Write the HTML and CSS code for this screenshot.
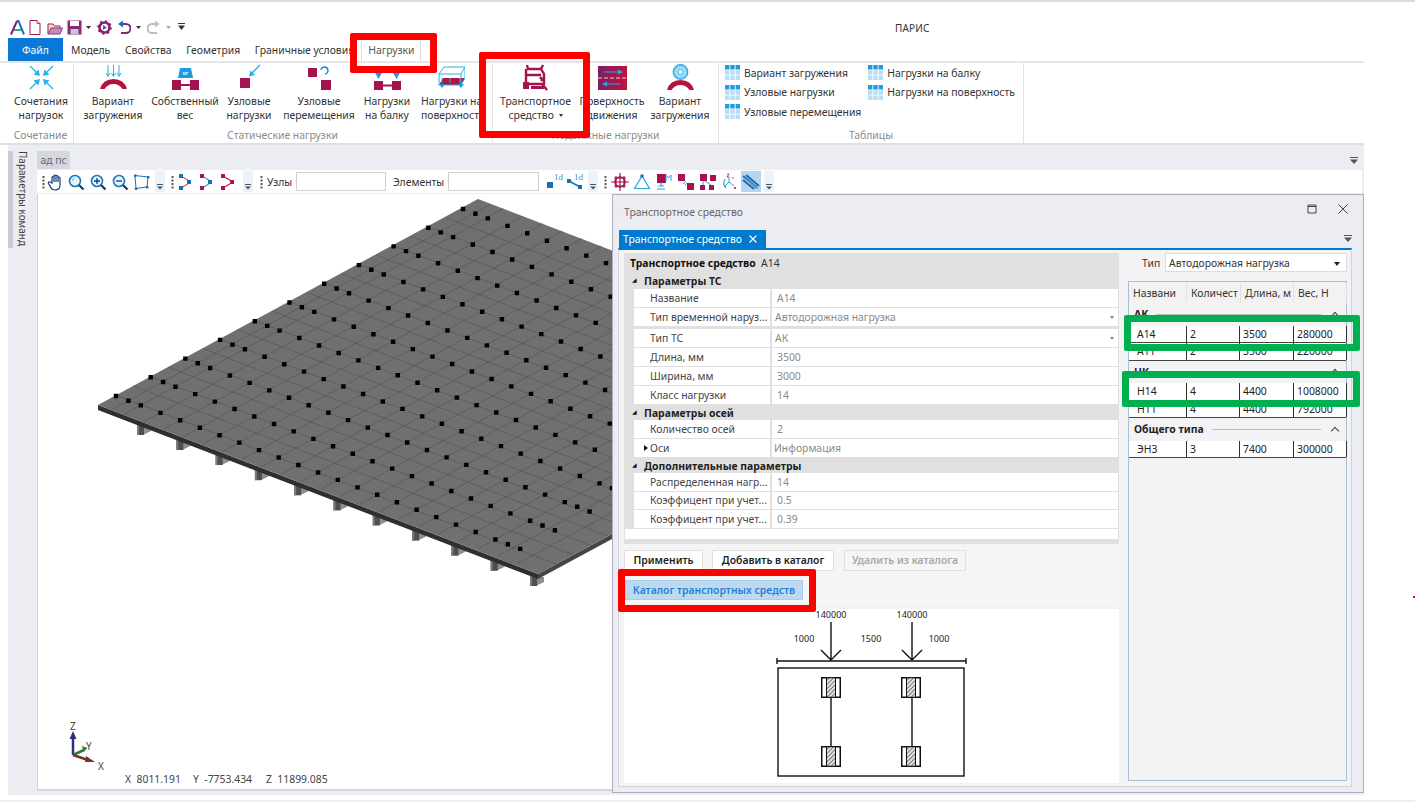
FILE: index.html
```html
<!DOCTYPE html>
<html lang="ru">
<head>
<meta charset="utf-8">
<title>ПАРИС</title>
<link rel="stylesheet" href="styles.css">
</head>
<body>
<svg class="defs" width="0" height="0">
  <defs>
    <symbol id="tbl" viewBox="0 0 15 15">
      <rect width="15" height="15" fill="#fff"/>
      <path d="M0 0h4.400v4.400H0zM5.300 0h4.400v4.400H5.300zM10.600 0H15v4.400h-4.400z" fill="#1e9be2"/>
      <path d="M0 5.300h4.400v4.400H0zM5.300 5.300h4.400v4.400H5.300zM10.600 5.300H15v4.400h-4.400zM0 10.600h4.400V15H0zM5.300 10.600h4.400V15H5.300zM10.600 10.600H15V15h-4.400z" fill="#b9dff7"/>
    </symbol>
    <symbol id="more" viewBox="0 0 10 21">
      <path d="M2 13.500h6" stroke="#555" stroke-width="1"/><path d="M2 15.500h6l-3 3z" fill="#555"/>
    </symbol>
    <symbol id="grip" viewBox="0 0 5 14">
      <path d="M1.500 1h2v2h-2zM1.500 4.500h2v2h-2zM1.500 8h2v2h-2zM1.500 11.500h2v2h-2z" fill="#555"/>
    </symbol>
    <symbol id="wheel" viewBox="0 0 20 21">
      <rect x=".75" y=".75" width="18.500" height="19.500" fill="#fff" stroke="#111" stroke-width="1.500"/>
      <rect x="5.500" y=".75" width="9" height="19.500" fill="url(#hatch)" stroke="#111" stroke-width="1"/>
    </symbol>
    <pattern id="hatch" width="3" height="3" patternUnits="userSpaceOnUse" patternTransform="rotate(45)">
      <rect width="3" height="3" fill="#e2e2e2"/><rect width="1" height="3" fill="#777"/>
    </pattern>
    <path id="dotrow" d="M-2.200-2.200h4.400v4.400h-4.400zm12.400 4.700h4.400v4.400h-4.400zm12.400 4.700h4.400v4.400h-4.400zm19.700 7.450h4.400v4.400h-4.400zm19.700 7.450h4.400v4.400h-4.400zm19.700 7.450h4.400v4.400h-4.400zm19.700 7.450h4.400v4.400h-4.400zm19.700 7.450h4.400v4.400h-4.400zm19.700 7.450h4.400v4.400h-4.400zm19.700 7.450h4.400v4.400h-4.400zm19.700 7.450h4.400v4.400h-4.400zm19.700 7.450h4.400v4.400h-4.400zm19.700 7.450h4.400v4.400h-4.400zm19.700 7.450h4.400v4.400h-4.400zm19.700 7.450h4.400v4.400h-4.400zm19.700 7.450h4.400v4.400h-4.400zm19.700 7.450h4.400v4.400h-4.400zm19.700 7.450h4.400v4.400h-4.400zm19.700 7.450h4.400v4.400h-4.400zm19.700 7.450h4.400v4.400h-4.400zm19.700 7.450h4.400v4.400h-4.400zm12.400 4.700h4.400v4.400h-4.400zm12.400 4.700h4.400v4.400h-4.400z"/>
    <g id="beam">
      <path d="M6 12l8-4V3H6z" fill="#8e8e8e"/>
      <rect width="7" height="12" fill="#4e4e4e"/>
      <rect width="2" height="12" fill="#7a7a7a"/>
    </g>
  </defs>
</svg>

<div class="app">
  <header class="titlebar">
    <div class="qat">
      <svg class="q q-a" viewBox="0 0 15 15"><path d="M1 14.500L7 1" fill="none" stroke="#8b1a6b" stroke-width="2"/><path d="M7 1h1.500L14 14.500" fill="none" stroke="#1a73b8" stroke-width="2"/><path d="M3.500 10h8" stroke="#158a7a" stroke-width="1.600"/></svg>
      <svg class="q q-doc" viewBox="0 0 12 15"><path d="M1 .5h7l3 3v11H1z" fill="#fff" stroke="#a3195b" stroke-width="1"/><path d="M8 .5v3h3" fill="#f2d9e4" stroke="#a3195b" stroke-width=".8"/></svg>
      <svg class="q q-open" viewBox="0 0 16 13"><path d="M1 12V2h5l1.500 2H13v2" fill="#f0dfb9" stroke="#a3195b" stroke-width="1"/><path d="M1 12l3-6h11.500L13 12z" fill="#c88ab0" stroke="#7b3f8f" stroke-width="1"/></svg>
      <svg class="q q-save" viewBox="0 0 15 15"><rect x=".5" y=".5" width="14" height="14" fill="#8d2a6d"/><rect x="3" y="1" width="9" height="5" fill="#fff"/><rect x="3.500" y="9" width="8" height="5" fill="#b9c8ea"/></svg>
      <svg class="q-arr" viewBox="0 0 5 3"><path d="M0 0h5L2.500 3z" fill="#333"/></svg>
      <svg class="q q-gear" viewBox="0 0 15 15"><circle cx="7.500" cy="7.500" r="5" fill="none" stroke="#8d1f6e" stroke-width="2.600"/><circle cx="7.500" cy="7.500" r="6.300" fill="none" stroke="#8d1f6e" stroke-width="2" stroke-dasharray="2 2.900"/><path d="M6 5l4 2.500L6 10z" fill="#2a6fc0"/></svg>
      <svg class="q q-undo" viewBox="0 0 13 15"><path d="M3 4h5a4 4 0 0 1 0 9H3" fill="none" stroke="#7b2a80" stroke-width="2"/><path d="M5 .5v7L0 4z" fill="#1a6fb8"/></svg>
      <svg class="q-arr q-gap" viewBox="0 0 5 3"><path d="M0 0h5L2.500 3z" fill="#333"/></svg>
      <svg class="q q-redo" viewBox="0 0 13 15"><path d="M10 4H5a4 4 0 0 0 0 9h5" fill="none" stroke="#bdbdbd" stroke-width="2"/><path d="M8 .5v7L13 4z" fill="#c4c4c4"/></svg>
      <svg class="q-arr q-gap2" viewBox="0 0 5 3"><path d="M0 0h5L2.500 3z" fill="#aaa"/></svg>
      <svg class="q-drop" viewBox="0 0 7 7"><path d="M0 0h7v1H0zM0 2.500h7L3.500 7z" fill="#333"/></svg>
    </div>
    <div class="apptitle">ПАРИС</div>
  </header>

  <nav class="tabs">
    <div class="tab-file">Файл</div>
    <div class="tab">Модель</div>
    <div class="tab">Свойства</div>
    <div class="tab">Геометрия</div>
    <div class="tab tab-wide">Граничные условия</div>
    <div class="tab-active">Нагрузки</div>
  </nav>

  <section class="ribbon">
    <div class="rgroup g1">
      <div class="rbtns">
        <div class="rb w-66">
          <svg class="ric" viewBox="0 0 27 27"><g stroke="#25b1ef" stroke-width="1.200"><path d="M2 2l7 7M25 2l-7 7M2 25l7-7M25 25l-7-7"/></g><path d="M12 12L5.500 10.500 10.500 5.500zM15 12l6.500-1.500L16.500 5.500zM12 15l-6.500 1.500 5 5zM15 15l6.500 1.500-5 5z" fill="#25b1ef"/></svg>
          <span>Сочетания<br>нагрузок</span>
        </div>
      </div>
      <div class="rlabel">Сочетание</div>
    </div>
    <div class="rgroup g2">
      <div class="rbtns">
        <div class="rb w-68">
          <svg class="ric" viewBox="0 0 27 27"><path d="M0 25Q3 15 13.500 15T27 25h-4.500Q19 20 13.500 20T4.500 25z" fill="#b3123f"/><g fill="none" stroke="#25b1ef" stroke-width="1"><path d="M8 1v11M13.500 1v11M19 1v11M6 9l2 3.500L10 9M11.500 9l2 3.500 2-3.500M17 9l2 3.500L21 9"/></g></svg>
          <span>Вариант<br>загружения</span>
        </div>
        <div class="rb w-76">
          <svg class="ric" viewBox="0 0 27 27"><path d="M0 16h9v10H0zM18 16h9v10H18zM9 20h9v2H9z" fill="#a4134f"/><path d="M8 4h11l2 10H6z" fill="#1c9be0"/><text x="13.500" y="11" class="kg">кг</text></svg>
          <span>Собственный<br>вес</span>
        </div>
        <div class="rb w-52">
          <svg class="ric" viewBox="0 0 27 27"><rect x="4" y="14" width="10" height="10" fill="#a4134f"/><path d="M24 1L15 10" stroke="#25b1ef" stroke-width="1.300"/><path d="M13 12.500l1.500-6 4.500 4.500z" fill="#25b1ef"/></svg>
          <span>Узловые<br>нагрузки</span>
        </div>
        <div class="rb w-88">
          <svg class="ric" viewBox="0 0 27 27"><rect x="2" y="4" width="9" height="9" fill="#a4134f"/><rect x="15" y="16" width="10" height="10" fill="#a4134f"/><path d="M15 6a3.500 3.500 0 1 1 4 4" fill="none" stroke="#1c8fd0" stroke-width="1.400"/></svg>
          <span>Узловые<br>перемещения</span>
        </div>
        <div class="rb w-48">
          <svg class="ric" viewBox="0 0 27 27"><path d="M0 17h9v9H0zM18 17h9v9H18zM9 20.500h9v2H9z" fill="#a4134f"/><path d="M0 7h9L4.500 15zM18 7h9L22.500 15z" fill="#1c9be0"/></svg>
          <span>Нагрузки<br>на балку</span>
        </div>
        <div class="rb w-surf">
          <svg class="ric" viewBox="0 0 27 27"><path d="M1 21L5 14H27L23 21z" fill="#b3123f"/><g fill="none" stroke="#25b1ef" stroke-width="1"><path d="M1 10L6 3h21v11l-4 7H1zM1 10h22v11M23 10l4-7M4 14v5M12 14v5M22 14v5"/></g><path d="M1 20h6l-3 4zM20 20h6l-3 4z" fill="#1c9be0"/></svg>
          <span>Нагрузки на<br>поверхность</span>
        </div>
      </div>
      <div class="rlabel rlabel-static">Статические нагрузки</div>
    </div>
    <div class="rgroup g3">
      <div class="rbtns">
        <div class="rb w-transport">
          <svg class="ric" viewBox="0 0 27 27"><g fill="none" stroke="#a4134f" stroke-width="2.400"><path d="M5 1l1 4h13l2-4M5 5h14l3 5v10H4V5M4 11h15M22 14l-3 3"/><path d="M20 20l5 6"/></g><path d="M1 18h6v7H1zM9 22h13v3H9z" fill="#a4134f"/><circle cx="19" cy="14" r="1.600" fill="#a4134f"/></svg>
          <span>Транспортное<br>средство <i class="tri"></i></span>
        </div>
        <div class="rb w-surface">
          <svg class="ric ric-w" viewBox="0 0 29 25"><defs><linearGradient id="g" x1="0" x2="1"><stop offset="0" stop-color="#7c1e63"/><stop offset="1" stop-color="#c0143c"/></linearGradient></defs><rect width="29" height="24" fill="url(#g)"/><path d="M0 12h29" stroke="#f3c8d2" stroke-width="1" stroke-dasharray="4 2"/><path d="M6 6h15M7 18h15" stroke="#25a6e8" stroke-width="1.200"/><path d="M20 3.500l5 2.500-5 2.500zM9 15.500L4 18l5 2.500z" fill="#25a6e8"/></svg>
          <span>Поверхность<br>движения</span>
        </div>
        <div class="rb w-variant2">
          <svg class="ric" viewBox="0 0 27 27"><path d="M0 26Q3 16 13.500 16T27 26h-4.500Q19 21 13.500 21T4.500 26z" fill="#b3123f"/><circle cx="13.500" cy="8" r="7.300" fill="#7fd0f5" stroke="#25a6e8" stroke-width="1.200"/><circle cx="13.500" cy="8" r="4.500" fill="none" stroke="#fff" stroke-width="1" stroke-dasharray="1.500 1"/><circle cx="13.500" cy="8" r="1.500" fill="#fff"/></svg>
          <span>Вариант<br>загружения</span>
        </div>
      </div>
      <div class="rlabel">Подвижные нагрузки</div>
    </div>
    <div class="rgroup g4">
      <div class="tables">
        <div class="tcol">
          <div class="trow"><svg class="tic"><use href="#tbl"/></svg>Вариант загружения</div>
          <div class="trow"><svg class="tic"><use href="#tbl"/></svg>Узловые нагрузки</div>
          <div class="trow"><svg class="tic"><use href="#tbl"/></svg>Узловые перемещения</div>
        </div>
        <div class="tcol">
          <div class="trow"><svg class="tic"><use href="#tbl"/></svg>Нагрузки на балку</div>
          <div class="trow"><svg class="tic"><use href="#tbl"/></svg>Нагрузки на поверхность</div>
        </div>
      </div>
      <div class="rlabel">Таблицы</div>
    </div>
  </section>

  <main class="work">
    <aside class="side">
      <div class="side-mark"></div>
      <div class="side-text">Параметры команд</div>
    </aside>
    <div class="main">
      <div class="doctabs">
        <div class="doctab">ад пс</div>
        <svg class="drop2" viewBox="0 0 8 7"><path d="M0 0h8v1H0zM0 2.500h8L4 7z" fill="#555"/></svg>
      </div>
      <div class="toolbar">
        <svg class="grip g-first"><use href="#grip"/></svg>
        <div class="ti ti-hand"><svg class="ico" viewBox="0 0 18 18"><path d="M5 10V4.500a1 1 0 0 1 2 0V9 3a1 1 0 0 1 2 0v6-5.500a1 1 0 0 1 2 0V9 5a1 1 0 0 1 2 0v7c0 3-2 5-5 5-2.500 0-3.500-1-4.500-3L1.500 10.500c-.8-1.500 1-2.300 2-1.200z" fill="#fff" stroke="#123a7a" stroke-width="1.200"/></svg></div>
        <div class="ti"><svg class="ico" viewBox="0 0 18 18"><circle cx="8" cy="8" r="5.500" fill="#e8f4fc" stroke="#1c78b8" stroke-width="1.600"/><path d="M12 12l4.500 4.500" stroke="#123a7a" stroke-width="2.200"/><path d="M5.500 8a2.500 2.500 0 0 1 2.500-2.500" stroke="#7cc6ee" stroke-width="1.200" fill="none"/></svg></div>
        <div class="ti"><svg class="ico" viewBox="0 0 18 18"><circle cx="8" cy="8" r="5.500" fill="#e8f4fc" stroke="#1c78b8" stroke-width="1.600"/><path d="M12 12l4.500 4.500" stroke="#123a7a" stroke-width="2.200"/><path d="M5 8h6M8 5v6" stroke="#123a7a" stroke-width="1.300"/></svg></div>
        <div class="ti"><svg class="ico" viewBox="0 0 18 18"><circle cx="8" cy="8" r="5.500" fill="#e8f4fc" stroke="#1c78b8" stroke-width="1.600"/><path d="M12 12l4.500 4.500" stroke="#123a7a" stroke-width="2.200"/><path d="M5 8h6" stroke="#123a7a" stroke-width="1.300"/></svg></div>
        <div class="ti"><svg class="ico" viewBox="0 0 18 18"><path d="M2 2.500l13 1.500-1 10-11 1.500z" fill="none" stroke="#1c6fb0" stroke-width="1"/><g fill="#1c6fb0"><rect x="1" y="1.500" width="2.400" height="2.400"/><rect x="14" y="3" width="2.400" height="2.400"/><rect x="13" y="13" width="2.400" height="2.400"/><rect x="1.800" y="14.500" width="2.400" height="2.400"/></g></svg></div>
        <svg class="strip"><use href="#more"/></svg>
        <svg class="grip g-two"><use href="#grip"/></svg>
        <div class="ti ti-21"><svg class="ico" viewBox="0 0 18 18"><path d="M4 3l10 6-10 6" fill="none" stroke="#c2185b" stroke-width="1"/><g fill="#1c6fb0"><rect x="2" y="1" width="4" height="4"/><rect x="2" y="13" width="4" height="4"/><rect x="10" y="7" width="4" height="4"/></g></svg></div>
        <div class="ti ti-21"><svg class="ico" viewBox="0 0 18 18"><path d="M4 3l10 6-10 6" fill="none" stroke="#1c6fb0" stroke-width="1"/><g fill="#b0124f"><rect x="2" y="1" width="4" height="4"/><rect x="2" y="13" width="4" height="4"/></g><rect x="10" y="7" width="4" height="4" fill="#1c6fb0"/></svg></div>
        <div class="ti ti-21"><svg class="ico" viewBox="0 0 18 18"><path d="M4 3l10 6-10 6" fill="none" stroke="#c2185b" stroke-width="1.200"/><g fill="#b0124f"><rect x="2" y="1" width="4" height="4"/><rect x="2" y="13" width="4" height="4"/><rect x="11" y="7" width="4" height="4"/></g></svg></div>
        <svg class="strip strip-3"><use href="#more"/></svg>
        <svg class="grip g-three"><use href="#grip"/></svg>
        <label class="tl tl-nodes">Узлы</label>
        <div class="tinput ti-90"></div>
        <label class="tl tl-elems">Элементы</label>
        <div class="tinput ti-91"></div>
        <div class="ti ti-1d"><svg class="ico" viewBox="0 0 18 18"><rect x="1" y="9" width="6" height="6" fill="#1c6fb0"/><text x="8" y="7" class="oned">1d</text></svg></div>
        <div class="ti"><svg class="ico" viewBox="0 0 18 18"><path d="M3 8l11 6" stroke="#1c6fb0" stroke-width="1.500"/><rect x="1" y="6" width="4" height="4" fill="#1c6fb0"/><rect x="12" y="12" width="4" height="4" fill="#1c6fb0"/><text x="8" y="7" class="oned">1d</text></svg></div>
        <svg class="strip"><use href="#more"/></svg>
        <svg class="grip g-four"><use href="#grip"/></svg>
        <div class="ti ti-cross"><svg class="ico" viewBox="0 0 18 18"><circle cx="9" cy="9" r="5" fill="none" stroke="#a4134f" stroke-width="1.600"/><path d="M9 0v18M0 9h18M5 3v12M13 3v12M3 5h12M3 13h12" stroke="#a4134f" stroke-width="1.200"/></svg></div>
        <div class="ti"><svg class="ico" viewBox="0 0 18 18"><path d="M9 3L1.500 15.500h15z" fill="none" stroke="#25a6e8" stroke-width="1.200"/><circle cx="9" cy="3" r="1.800" fill="#1c78b8"/></svg></div>
        <div class="ti"><svg class="ico" viewBox="0 0 18 18"><rect x="2" y="1" width="9" height="9" fill="#a4134f"/><path d="M6 10v3M3 13h6M2 16h8" stroke="#25a6e8" stroke-width="1.200"/><path d="M11 8V2l2.500 3L16 2v6" fill="none" stroke="#25a6e8" stroke-width="1"/></svg></div>
        <div class="ti"><svg class="ico" viewBox="0 0 18 18"><rect x="1" y="1" width="7" height="7" fill="#a4134f"/><rect x="10" y="10" width="7" height="7" fill="#a4134f"/><path d="M6 11l3-3M8 12l2-2" stroke="#25a6e8" stroke-width="1"/></svg></div>
        <div class="ti"><svg class="ico" viewBox="0 0 18 18"><g fill="#a4134f"><rect x="1" y="1" width="7" height="7"/><rect x="11" y="2" width="6" height="6"/><rect x="1" y="12" width="5" height="5"/><rect x="10" y="12" width="5" height="5"/></g><path d="M4 8v4M6 8l6 4" stroke="#25a6e8" stroke-width="1"/></svg></div>
        <div class="ti"><svg class="ico" viewBox="0 0 18 18"><path d="M8 9L3 14M8 9l5 4M8 9V4" fill="none" stroke="#25a6e8" stroke-width="1"/><path d="M4 6Q1 11 5 15" fill="none" stroke="#1c78b8" stroke-width="1"/><path d="M6 1l2 0-2 3h2M11 5l2 0M13 14l2 2M15 14l-2 2" stroke="#b0124f" stroke-width=".8" fill="none"/></svg></div>
        <div class="ti ti-on"><svg class="ico" viewBox="0 0 18 18"><g stroke="#1c6fb0" stroke-width="2.200"><path d="M1 3l14 12M1 7l11 9M4 2l13 11"/></g><path d="M2 5l14 11" stroke="#7fb5dc" stroke-width="1"/></svg></div>
        <svg class="strip strip-on"><use href="#more"/></svg>
      </div>
      <div class="viewport">
        <svg class="scene" viewBox="37 194 575 597">
          <use href="#beam" x="137" y="423"/><use href="#beam" x="176.300" y="438"/><use href="#beam" x="215.600" y="453"/><use href="#beam" x="254.900" y="468.200"/><use href="#beam" x="294.200" y="483.300"/><use href="#beam" x="333.500" y="498.400"/><use href="#beam" x="372.800" y="513.500"/><use href="#beam" x="412.100" y="528.600"/><use href="#beam" x="451.400" y="543.700"/><use href="#beam" x="490.700" y="558.800"/><use href="#beam" x="530" y="574"/>
          <path d="M98 405L538 574v5L98 410z" fill="#2f2f2f"/>
          <path d="M538 574l74-40v5l-74 40z" fill="#454545"/>
          <path d="M98 405L478 199 918 368 538 574z" fill="#707070"/>
          <path class="gridlines" d="M116 395.200l440 169m-422.650-178.350l440 169m-422.650-178.350l440 169m-422.650-178.350l440 169m-422.650-178.350l440 169m-422.650-178.350l440 169m-422.650-178.350l440 169m-422.650-178.350l440 169m-422.650-178.350l440 169m-422.650-178.350l440 169m-422.650-178.350l440 169m-422.650-178.350l440 169m-422.650-178.350l440 169m-422.650-178.350l440 169m-422.650-178.350l440 169m-422.650-178.350l440 169m-422.650-178.350l440 169m-422.650-178.350l440 169m-422.650-178.350l440 169m-422.650-178.350l440 169"/>
          <path class="gridlines" d="M111 410l380-206m-367.600 210.700l380-206m-360.300 213.450l380-206m-360.300 213.450l380-206m-360.300 213.450l380-206m-360.300 213.450l380-206m-360.300 213.450l380-206m-360.300 213.450l380-206m-360.300 213.450l380-206m-360.300 213.450l380-206m-360.300 213.450l380-206m-360.300 213.450l380-206m-360.300 213.450l380-206m-360.300 213.450l380-206m-360.300 213.450l380-206m-360.300 213.450l380-206m-360.300 213.450l380-206m-360.300 213.450l380-206m-360.300 213.450l380-206m-360.300 213.450l380-206m-360.300 213.450l380-206m-360.300 213.450l380-206"/>
          <use href="#dotrow" x="116" y="396"/><use href="#dotrow" x="150.700" y="377.300"/><use href="#dotrow" x="185.400" y="358.600"/><use href="#dotrow" x="220.100" y="339.900"/><use href="#dotrow" x="254.800" y="321.200"/><use href="#dotrow" x="289.500" y="302.500"/><use href="#dotrow" x="324.200" y="283.800"/><use href="#dotrow" x="358.900" y="265.100"/><use href="#dotrow" x="393.600" y="246.400"/><use href="#dotrow" x="428.300" y="227.700"/><use href="#dotrow" x="463" y="209"/>
          <path d="M73 755V737" stroke="#2f2f80" stroke-width="2.500"/><path d="M69.500 739L73 731l3.500 8z" fill="#2f2f80"/>
          <path d="M73 755l11-5" stroke="#2e7d32" stroke-width="2.500"/><path d="M82 746l5.500 2-4 4z" fill="#2e7d32"/>
          <path d="M73 755l15 5" stroke="#7a2f2f" stroke-width="2.500"/><path d="M86 756l9 6-10 0z" fill="#7a2f2f"/>
          <text x="70" y="730" class="ax">Z</text><text x="86" y="750" class="ax">Y</text><text x="98" y="770" class="ax">X</text>
          <text x="125" y="783" class="coord">X  8011.191</text><text x="193" y="783" class="coord">Y  -7753.434</text><text x="266" y="783" class="coord">Z  11899.085</text>
        </svg>
      </div>
    </div>

    <div class="panel">
      <div class="ptitle">
        <span>Транспортное средство</span>
        <svg class="pbtn pb-max" viewBox="0 0 10 10"><path d="M1 1h8v8H1zM1 2.500h8" fill="none" stroke="#444" stroke-width="1"/></svg>
        <svg class="pbtn" viewBox="0 0 10 10"><path d="M.5.5l9 9M9.500.5l-9 9" stroke="#444" stroke-width="1"/></svg>
      </div>
      <div class="ptabs">
        <div class="ptab">Транспортное средство <svg class="ptabx" viewBox="0 0 8 8"><path d="M.5.5l7 7M7.500.5l-7 7" stroke="#fff" stroke-width="1.100"/></svg></div>
        <svg class="drop3" viewBox="0 0 8 7"><path d="M0 0h8v1H0zM0 2.500h8L4 7z" fill="#555"/></svg>
      </div>
      <div class="pbody">
        <div class="pleft">
          <div class="grid">
            <div class="ghead"><b>Транспортное средство</b>&nbsp; А14</div>
            <div class="ggroup g16"><i class="gtri">◢</i>Параметры ТС</div>
            <div class="grow"><div class="gl">Название</div><div class="gv">А14</div></div>
            <div class="grow grow-gap"><div class="gl">Тип временной наруз...</div><div class="gv gv-c">Автодорожная нагрузка<i class="mini"></i></div></div>
            <div class="grow"><div class="gl">Тип ТС</div><div class="gv gv-c">АК<i class="mini"></i></div></div>
            <div class="grow"><div class="gl">Длина, мм</div><div class="gv">3500</div></div>
            <div class="grow"><div class="gl">Ширина, мм</div><div class="gv">3000</div></div>
            <div class="grow"><div class="gl">Класс нагрузки</div><div class="gv">14</div></div>
            <div class="ggroup g15"><i class="gtri">◢</i>Параметры осей</div>
            <div class="grow"><div class="gl">Количество осей</div><div class="gv">2</div></div>
            <div class="grow"><div class="gl gl-exp"><i class="exp"></i>Оси</div><div class="gv gv-i">Информация</div></div>
            <div class="ggroup g15"><i class="gtri">◢</i>Дополнительные параметры</div>
            <div class="grow tight"><div class="gl">Распределенная нагр...</div><div class="gv">14</div></div>
            <div class="grow tight"><div class="gl">Коэффицент при учет...</div><div class="gv">0.5</div></div>
            <div class="grow tight"><div class="gl">Коэффицент при учет...</div><div class="gv">0.39</div></div>
            <div class="gempty"></div>
          </div>
          <div class="actions">
            <div class="btnrow">
              <div class="btn b-apply">Применить</div>
              <div class="btn b-add">Добавить в каталог</div>
              <div class="btn b-del">Удалить из каталога</div>
            </div>
            <div class="btn-cat">Каталог транспортных средств</div>
          </div>
          <div class="diagram">
            <svg class="dsvg" viewBox="0 0 494 174">
              <text x="207" y="9" class="dt">140000</text><text x="288" y="9" class="dt">140000</text>
              <text x="180" y="33" class="dt">1000</text><text x="247" y="33" class="dt">1500</text><text x="315" y="33" class="dt">1000</text>
              <g fill="none" stroke="#111" stroke-width="1.400">
                <path d="M207 13v38M197 41l10 10 10-10M288 13v38M278 41l10 10 10-10"/>
                <path d="M153 52h189M153 49v6M342 49v6"/>
                <rect x="154" y="59" width="186" height="108"/>
                <path d="M207 88v49M288 88v49"/>
              </g>
              <use href="#wheel" x="197" y="68" width="20" height="21"/><use href="#wheel" x="277" y="68" width="20" height="21"/>
              <use href="#wheel" x="197" y="137" width="20" height="21"/><use href="#wheel" x="277" y="137" width="20" height="21"/>
            </svg>
          </div>
        </div>
        <div class="pright">
          <div class="typerow"><span>Тип</span><div class="combo">Автодорожная нагрузка<i class="mini dark"></i></div></div>
          <div class="listbox">
            <div class="lhead"><div>Названи</div><div>Количест</div><div>Длина, м</div><div>Вес, Н</div></div>
            <div class="lgroup"><span>АК</span><i class="lline"></i><i class="chev"></i></div>
            <div class="lrow"><div>А14</div><div>2</div><div>3500</div><div>280000</div></div>
            <div class="lrow"><div>А11</div><div>2</div><div>3500</div><div>220000</div></div>
            <div class="lgroup"><span>НК</span><i class="lline"></i><i class="chev"></i></div>
            <div class="lrow"><div>Н14</div><div>4</div><div>4400</div><div>1008000</div></div>
            <div class="lrow"><div>Н11</div><div>4</div><div>4400</div><div>792000</div></div>
            <div class="lgroup"><span>Общего типа</span><i class="lline"></i><i class="chev"></i></div>
            <div class="lrow"><div>ЭН3</div><div>3</div><div>7400</div><div>300000</div></div>
          </div>
        </div>
      </div>
    </div>
  </main>
  <div class="footline"></div>

  <div class="mark red r-tab"></div>
  <div class="mark red r-transport"></div>
  <div class="mark red r-catalog"></div>
  <div class="mark green g-a14"></div>
  <div class="mark green g-h14"></div>
  <div class="mark r-tick"></div>
</div>
</body>
</html>
```

FILE: styles.css
```css
* { box-sizing: border-box; }
html, body { margin: 0; padding: 0; height: 802px; overflow: hidden; background: #fff; }
body { font-family: "Noto Sans", "Open Sans", sans-serif; font-size: 10.4px; color: #333; }
i { font-style: normal; }
.defs { position: absolute; }
.app { position: relative; width: 1415px; height: 802px; overflow: hidden; }

/* title bar */
.titlebar { height: 38px; border-top: 2px solid #dcdcdc; display: flex; padding-left: 10px; }
.qat { display: flex; align-items: flex-start; padding-top: 18px; width: 176px; }
.q { display: block; }
.q-a { width: 15px; height: 15px; }
.q-doc { width: 12px; height: 15px; margin-left: 4px; }
.q-open { width: 16px; height: 13px; margin: 2px 0 0 6px; }
.q-save { width: 15px; height: 15px; margin-left: 4px; }
.q-arr { width: 5px; height: 3px; margin: 6px 0 0 4px; }
.q-gear { width: 15px; height: 15px; margin-left: 6px; }
.q-undo { width: 13px; height: 15px; margin-left: 6px; }
.q-gap { margin-left: 5px; }
.q-redo { width: 13px; height: 15px; margin-left: 6px; }
.q-gap2 { margin-left: 6px; }
.q-drop { width: 7px; height: 7px; margin: 3px 0 0 7px; }
.apptitle { margin: 19px 0 0 709px; font-size: 10px; color: #333; letter-spacing: .2px; }

/* tabs */
.tabs { height: 23px; display: flex; align-items: stretch; padding-left: 8px; gap: 14.600px; position: relative; width: 1364px; }
.tab-file { width: 55px; margin-right: -6.600px; background: #0a78d7; color: #fff; display: flex; align-items: center; justify-content: center; }
.tab { display: flex; align-items: center; white-space: nowrap; color: #333; }
.tab-wide { width: 95px; }
.tab-active { margin-left: -3px; width: 60px; display: flex; align-items: center; justify-content: center; border: 1px solid #dcdcdc; border-bottom: 0; background: #fff; color: #555; }

/* ribbon */
.ribbon { height: 84px; width: 1364px; border-top: 2px solid #e6e6e6; display: flex; padding-left: 8px; border-bottom: 2px solid #dfdfe3; }
.rgroup { display: flex; flex-direction: column; padding-top: 1px; height: 80px; }
.g1 { width: 66px; border-right: 1px solid #e3e3e3; }
.g2 { width: 419px; border-right: 1px solid #e3e3e3; padding-left: 5px; }
.g3 { width: 226px; border-right: 1px solid #e3e3e3; }
.g4 { width: 305px; border-right: 1px solid #e3e3e3; }
.rbtns { display: flex; height: 64px; }
.rb { display: flex; flex-direction: column; align-items: center; text-align: center; line-height: 14px; white-space: nowrap; flex: none; color: #333; }
.rb span { display: block; margin-top: 3px; }
.ric { width: 27px; height: 27px; flex: none; display: block; }
.ric-w { width: 29px; height: 25px; margin-top: 2px; }
.kg { font-size: 5px; fill: #fff; text-anchor: middle; font-weight: 700; }
.w-66 { width: 66px; }
.w-68 { width: 68px; }
.w-76 { width: 76px; }
.w-52 { width: 52px; }
.w-88 { width: 88px; }
.w-48 { width: 48px; }
.w-surf { width: 58px; margin-left: 10px; align-items: flex-start; text-align: left; }
.w-surf .ric { margin-left: 17px; }
.w-transport { width: 85px; }
.w-surface { width: 68px; }
.w-variant2 { width: 68px; }
.tri { display: inline-block; width: 0; height: 0; border: 2px solid transparent; border-top: 3px solid #333; border-bottom: 0; margin: 0 0 2px 2px; }
.rlabel { text-align: center; color: #8b8b8b; line-height: 14px; }
.rlabel-static { margin-right: 6px; }
.tables { display: flex; height: 64px; padding-left: 6px; gap: 7px; margin-top: -1px; }
.tcol { display: flex; flex-direction: column; }
.trow { display: flex; align-items: center; height: 19.500px; white-space: nowrap; gap: 4px; }
.tic { width: 15px; height: 15px; flex: none; }
.tables + .rlabel { margin-top: 1px; }

/* workspace */
.work { position: relative; width: 1356px; height: 650px; margin-left: 8px; background: #ecedf2; display: flex; }
.footline { position: absolute; left: 0; right: 0; bottom: 0; height: 2px; background: #f0f0f0; }
.side { width: 29px; flex: none; position: relative; padding-top: 6px; display: flex; }
.side-mark { width: 5px; height: 97px; background: #c9ccd8; flex: none; }
.side-text { writing-mode: vertical-rl; height: 97px; margin-left: 2px; color: #444; white-space: nowrap; line-height: 15px; font-size: 10px; }
.main { flex: 1; display: flex; flex-direction: column; padding: 6px 2px 4px 0; min-width: 0; }
.doctabs { height: 18px; display: flex; align-items: center; justify-content: space-between; padding-right: 4px; }
.doctab { width: 33px; height: 18px; background: #d5d7e0; color: #666; display: flex; align-items: center; justify-content: center; }
.drop2 { width: 8px; height: 7px; }
.toolbar { height: 23px; margin-top: 1px; background: #fff; display: flex; align-items: center; padding-left: 4px; flex: none; }
.grip { width: 5px; height: 14px; flex: none; }
.g-two { margin-left: 5px; }
.g-three { margin-left: 6px; }
.g-four { margin-left: 5px; margin-right: 1px; }
.ti { width: 22px; height: 21px; display: flex; align-items: center; justify-content: center; flex: none; }
.ti-hand { width: 19px; }
.ti-21 { width: 21px; }
.ti-1d { width: 19px; margin-left: 6px; }
.ti-on { background: #b5d5f0; margin-right: 3px; width: 20px; }
.ti-cross { width: 22px; }
.ico { width: 18px; height: 18px; display: block; }
.strip { width: 10px; height: 21px; background: #eaf2fb; margin-left: 2px; flex: none; }
.strip-3 { margin-left: 5px; }
.strip-on { margin-left: 0; }
.oned { font-family: "Liberation Serif", serif; font-size: 9px; fill: #4a8ac0; }
.tl { white-space: nowrap; flex: none; color: #333; }
.tl-nodes { width: 29px; margin-left: 3px; }
.tl-elems { width: 55px; margin-left: 7px; }
.tinput { height: 19px; background: #fff; border: 1px solid #cfcfcf; flex: none; }
.ti-90 { width: 90px; }
.ti-91 { width: 91px; }
.viewport { flex: 1; background: #fff; border-left: 1px solid #cfd2dc; border-bottom: 2px solid #d5d7e0; margin-top: 1px; position: relative; overflow: hidden; }
.scene { position: absolute; left: -1px; top: 0; width: 575px; height: 597px; }
.gridlines { fill: none; stroke: #4c4c4c; stroke-width: .5; }
.ax { font-size: 10px; fill: #444; }
.coord { font-size: 10.400px; fill: #444; white-space: pre; }

/* floating panel */
.panel { position: absolute; left: 604px; top: 49px; width: 752px; height: 599px; background: #ecedf2; border: 1px solid #a9adbd; display: flex; flex-direction: column; }
.ptitle { height: 34px; display: flex; align-items: center; padding: 0 15px 0 11px; color: #666; flex: none; }
.ptitle span { flex: 1; }
.pbtn { width: 10px; height: 10px; margin-top: -6px; }
.pb-max { margin-right: 21px; }
.ptabs { height: 17px; margin: 1px 11px 0 6px; display: flex; justify-content: space-between; align-items: center; flex: none; }
.ptab { height: 18px; width: 147px; background: #007acc; color: #fff; display: flex; align-items: center; padding-left: 4px; white-space: nowrap; }
.ptabx { width: 8px; height: 8px; margin-left: 7px; }
.drop3 { width: 8px; height: 7px; }
.pbody { flex: 1; margin: 1px 11px 5px 5px; border: 1px solid #d0d3dd; border-top: 2px solid #007acc; background: #f3f3f6; display: flex; padding: 3px 4px 3px 5px; min-height: 0; }
.pleft { width: 495px; flex: none; display: flex; flex-direction: column; }
.grid { background: #e0e0e0; padding-bottom: 5px; flex: none; }
.ghead { height: 20px; display: flex; align-items: center; padding-left: 6px; color: #333; }
.ghead b { color: #111; }
.ggroup { display: flex; align-items: center; font-weight: 700; color: #222; padding-left: 8px; }
.g16 { height: 16px; }
.g15 { height: 15px; }
.gtri { font-family: "DejaVu Sans", sans-serif; font-size: 6px; width: 12px; font-weight: 400; color: #111; margin-bottom: 3px; }
.grow { height: 18px; margin: 0 1px 1px 10px; display: flex; gap: 2px; }
.grow-gap { margin-bottom: 3px; }
.tight { height: 17.500px; }
.gl { width: 136px; background: #fff; padding-left: 16px; display: flex; align-items: center; white-space: nowrap; overflow: hidden; color: #444; flex: none; }
.gl-exp { padding-left: 10px; }
.exp { width: 0; height: 0; border: 3px solid transparent; border-left: 4px solid #111; border-right: 0; margin-right: 2px; }
.gv { flex: 1; background: #fff; padding-left: 5px; display: flex; align-items: center; color: #8a8a8a; position: relative; }
.gv-c { padding-left: 3px; }
.gv-i { padding-left: 2px; }
.mini { position: absolute; right: 4px; top: 8px; width: 0; height: 0; border: 2px solid transparent; border-top: 3px solid #888; border-bottom: 0; }
.mini.dark { border-top-color: #222; border-width: 3px; border-top-width: 4px; border-bottom: 0; right: 6px; top: 8px; }
.gempty { height: 10px; background: #fff; margin: 0 1px; }
.actions { margin-top: 1px; height: 58px; background: #f5f5f5; padding: 5px 1px 5px 0; flex: none; }
.btnrow { display: flex; height: 21px; }
.btn { height: 21px; background: #fff; border: 1px solid #e0e0e0; display: flex; align-items: center; justify-content: center; color: #222; font-weight: 600; white-space: nowrap; }
.b-apply { width: 79px; }
.b-add { width: 122px; margin-left: 9px; }
.b-del { width: 122px; margin-left: 10px; color: #a8a8a8; background: #f5f5f5; }
.btn-cat { margin: 9px 0 0 1px; width: 178px; height: 20px; background: #bcd9f0; border: 1px solid #a6cfef; color: #1f7fd8; font-weight: 600; display: flex; align-items: center; justify-content: center; white-space: nowrap; }
.diagram { margin-top: 6px; height: 174px; background: #fff; flex: none; }
.dsvg { display: block; width: 494px; height: 174px; }
.dt { font-size: 9px; fill: #222; text-anchor: middle; }
.pright { flex: 1; min-width: 0; padding: 0 0 2px 9px; display: flex; flex-direction: column; }
.typerow { display: flex; align-items: center; height: 19px; padding-left: 14px; flex: none; }
.typerow span { width: 23px; color: #333; }
.combo { flex: 1; height: 19px; background: #fff; border: 1px solid #dcdcdc; padding-left: 3px; display: flex; align-items: center; position: relative; white-space: nowrap; }
.listbox { flex: 1; margin-top: 9px; background: #f3f3f6; border: 1px solid #a9bfd5; padding-top: 1px; }
.lhead { display: grid; grid-template-columns: 58px 54px 53px 53px; height: 20px; background: #f2f2f2; }
.lhead div { display: flex; align-items: center; padding-left: 4px; overflow: hidden; white-space: nowrap; border-right: 1px solid #e2e2e2; }
.lgroup { height: 22.500px; display: flex; align-items: center; padding: 0 5px; font-weight: 700; color: #222; }
.lline { flex: 1; height: 1px; background: #bbb; margin: 0 8px; }
.chev { width: 6px; height: 6px; border: solid #444; border-width: 1px 0 0 1px; transform: rotate(45deg); margin: 3px 3px 0 3px; }
.lrow { display: grid; grid-template-columns: 58px 53px 54px 53px; height: 17.500px; border-bottom: 1px solid #444; background: #fff; }
.lrow div { display: flex; align-items: center; padding-left: 3px; white-space: nowrap; border-right: 1px solid #333; color: #222; }
.lrow div:first-child { padding-left: 8px; }

/* annotation frames drawn over the screenshot */
.mark { position: absolute; pointer-events: none; border-radius: 2px; }
.red { border: 7px solid #ff0000; }
.green { border: 7px solid #00b050; }
.r-tab { left: 350px; top: 33px; width: 87px; height: 40px; }
.r-transport { left: 479px; top: 52px; width: 111px; height: 86px; }
.r-catalog { left: 618px; top: 569px; width: 198px; height: 43px; }
.g-a14 { left: 1124px; top: 315px; width: 236px; height: 36px; }
.g-h14 { left: 1122px; top: 371px; width: 238px; height: 36px; }
.r-tick { left: 1413px; top: 596px; width: 2px; height: 2px; background: #ff0000; border-radius: 0; }
```
